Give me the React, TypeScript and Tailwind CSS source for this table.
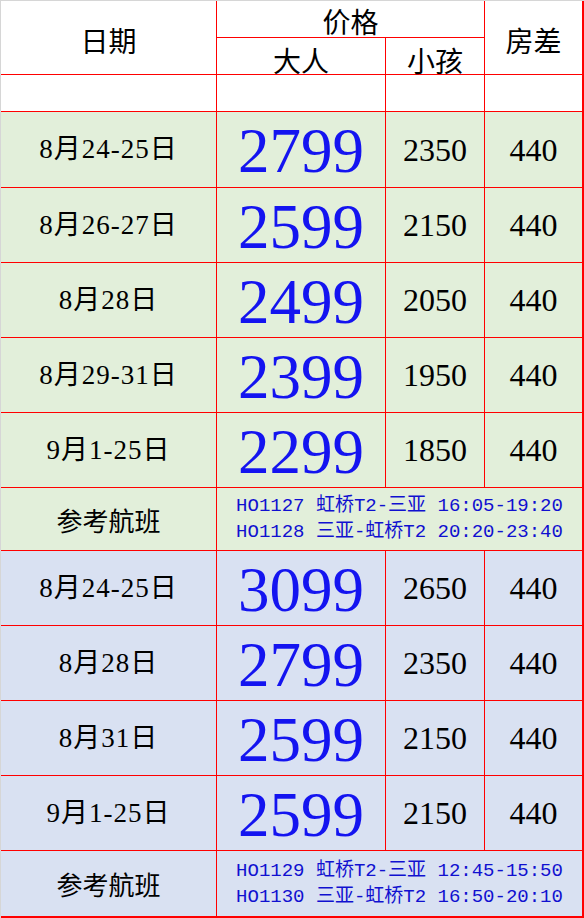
import React from 'react';

type PriceRow = {
  date: string;
  adult: string;
  child: string;
  room: string;
};

const greenRows: PriceRow[] = [
  { date: '8月24-25日', adult: '2799', child: '2350', room: '440' },
  { date: '8月26-27日', adult: '2599', child: '2150', room: '440' },
  { date: '8月28日', adult: '2499', child: '2050', room: '440' },
  { date: '8月29-31日', adult: '2399', child: '1950', room: '440' },
  { date: '9月1-25日', adult: '2299', child: '1850', room: '440' },
];

const blueRows: PriceRow[] = [
  { date: '8月24-25日', adult: '3099', child: '2650', room: '440' },
  { date: '8月28日', adult: '2799', child: '2350', room: '440' },
  { date: '8月31日', adult: '2599', child: '2150', room: '440' },
  { date: '9月1-25日', adult: '2599', child: '2150', room: '440' },
];

const cjk = "font-['Noto_Sans_CJK_SC',sans-serif]";
const serif = "font-['Liberation_Serif','Noto_Sans_CJK_SC',serif]";
const mono = "font-['Liberation_Mono','Noto_Sans_CJK_SC',monospace]";

// grid lines come from the red container showing through 1px gaps
const cell = 'flex items-center justify-center';

const Rows: React.FC<{ rows: PriceRow[]; bg: string; flights: string[] }> = ({ rows, bg, flights }) => (
  <>
    {rows.map((r, i) => (
      <React.Fragment key={i}>
        <div className={`${cell} ${bg} ${serif} text-[27px] tracking-[1px] text-black`}>{r.date}</div>
        <div className={`${cell} ${bg} ${serif} text-[63px] leading-none text-[#1414f0] pt-1`}>{r.adult}</div>
        <div className={`${cell} ${bg} ${serif} text-[32px] text-black`}>{r.child}</div>
        <div className={`${cell} ${bg} ${serif} text-[32px] text-black`}>{r.room}</div>
      </React.Fragment>
    ))}
    <div className={`${cell} ${bg} ${cjk} text-[26px] text-black`}>参考航班</div>
    <div className={`${cell} ${bg} col-span-3 flex-col ${mono} text-[19px] leading-[26px] text-[#1010d0]`}>
      {flights.map((f) => (
        <div key={f} className="whitespace-pre">
          {f}
        </div>
      ))}
    </div>
  </>
);

export default function App() {
  return (
    <div className="w-[584px] h-[918px] bg-white overflow-hidden">
      <div className="grid w-[584px] h-[918px] grid-cols-[215px_168px_98px_97px] grid-rows-[36px_36px_36px_75px_74px_74px_74px_74px_62px_74px_74px_74px_74px_65px] gap-px bg-[#ff0000] border-l border-t border-[#d6d6d6] pr-[2px] pb-[2px]">
        {/* header */}
        <div className={`${cell} bg-white row-span-2 ${cjk} text-[28px] text-black pt-1`}>日期</div>
        <div className={`${cell} bg-white col-span-2 ${cjk} text-[28px] text-black leading-none pt-1`}>价格</div>
        <div className={`${cell} bg-white row-span-2 ${cjk} text-[28px] text-black pt-1`}>房差</div>
        <div className={`${cell} bg-white ${cjk} text-[28px] text-black leading-none pt-2`}>大人</div>
        <div className={`${cell} bg-white ${cjk} text-[28px] text-black leading-none pt-2`}>小孩</div>

        {/* blank row */}
        <div className="bg-white" />
        <div className="bg-white" />
        <div className="bg-white" />
        <div className="bg-white" />

        <Rows
          rows={greenRows}
          bg="bg-[#e2efda]"
          flights={['HO1127 虹桥T2-三亚 16:05-19:20', 'HO1128 三亚-虹桥T2 20:20-23:40']}
        />
        <Rows
          rows={blueRows}
          bg="bg-[#d9e1f2]"
          flights={['HO1129 虹桥T2-三亚 12:45-15:50', 'HO1130 三亚-虹桥T2 16:50-20:10']}
        />
      </div>
    </div>
  );
}
